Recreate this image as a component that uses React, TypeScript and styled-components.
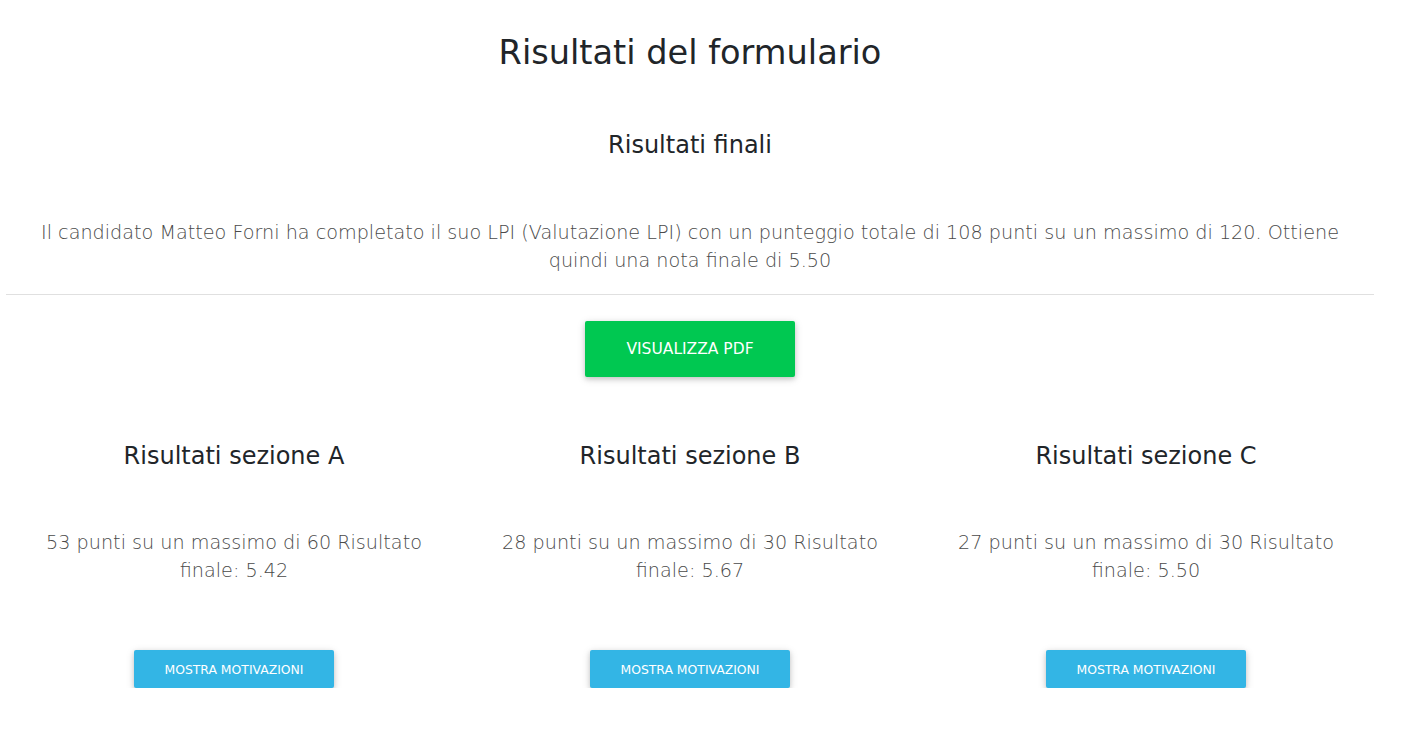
import React from "react";
import styled, { createGlobalStyle } from "styled-components";

const Global = createGlobalStyle`
  html, body { margin: 0; padding: 0; background: #fff; }
  body { font-family: "DejaVu Sans", "Noto Sans", sans-serif; color: #212529; }
  * { box-sizing: border-box; }
`;

const Page = styled.div`
  width: 1368px;
  margin-left: 6px;
  text-align: center;
`;

const Title = styled.h1`
  margin: 0;
  padding-top: 31px;
  font-size: 33.6px;
  font-weight: 400;
  line-height: 44px;
  color: #212529;
`;

const Subtitle = styled.h2`
  margin: 54px 0 0;
  font-size: 24px;
  font-weight: 400;
  line-height: 32px;
`;

const Summary = styled.p`
  margin: 58px 30px 0;
  font-size: 19.2px;
  font-weight: 300;
  line-height: 28px;
  color: #4a4a4a;
`;

const Rule = styled.hr`
  margin: 19px 0 0;
  border: 0;
  border-top: 1px solid #e0e0e0;
`;

const Button = styled.button<{ $variant: "success" | "info"; $size: "md" | "sm" }>`
  border: 0;
  border-radius: 2px;
  color: #fff;
  font-family: inherit;
  text-transform: uppercase;
  background: ${(p) => (p.$variant === "success" ? "#00c851" : "#33b5e5")};
  box-shadow: 0 2px 5px 0 rgba(0, 0, 0, 0.16), 0 2px 10px 0 rgba(0, 0, 0, 0.12);
  width: ${(p) => (p.$size === "md" ? "210px" : "200px")};
  height: ${(p) => (p.$size === "md" ? "56px" : "38px")};
  font-size: ${(p) => (p.$size === "md" ? "15.5px" : "12.4px")};
  cursor: pointer;
`;

const PdfRow = styled.div`
  margin-top: 26px;
  display: flex;
  justify-content: center;
`;

const Sections = styled.div`
  margin-top: 63px;
  display: grid;
  grid-template-columns: repeat(3, 1fr);
`;

const Section = styled.div`
  display: flex;
  flex-direction: column;
  align-items: center;
  padding: 0 15px;
`;

const SectionTitle = styled.h3`
  margin: 0;
  font-size: 24px;
  font-weight: 400;
  line-height: 32px;
`;

const SectionText = styled.p`
  margin: 57px 0 0;
  padding: 0 20px;
  font-size: 19.2px;
  font-weight: 300;
  line-height: 28px;
  color: #4a4a4a;
`;

const SectionButtonRow = styled.div`
  margin-top: 65px;
`;

const sections = [
  { name: "A", pts: 53, max: 60, grade: "5.42" },
  { name: "B", pts: 28, max: 30, grade: "5.67" },
  { name: "C", pts: 27, max: 30, grade: "5.50" },
];

export default function App() {
  return (
    <>
      <Global />
      <Page>
        <Title>Risultati del formulario</Title>
        <Subtitle>Risultati finali</Subtitle>
        <Summary>
          Il candidato Matteo Forni ha completato il suo LPI (Valutazione LPI) con un punteggio totale di 108 punti su un
          massimo di 120. Ottiene quindi una nota finale di 5.50
        </Summary>
        <Rule />
        <PdfRow>
          <Button $variant="success" $size="md">Visualizza PDF</Button>
        </PdfRow>
        <Sections>
          {sections.map((s) => (
            <Section key={s.name}>
              <SectionTitle>Risultati sezione {s.name}</SectionTitle>
              <SectionText>
                {s.pts} punti su un massimo di {s.max} Risultato finale: {s.grade}
              </SectionText>
              <SectionButtonRow>
                <Button $variant="info" $size="sm">Mostra motivazioni</Button>
              </SectionButtonRow>
            </Section>
          ))}
        </Sections>
      </Page>
    </>
  );
}
